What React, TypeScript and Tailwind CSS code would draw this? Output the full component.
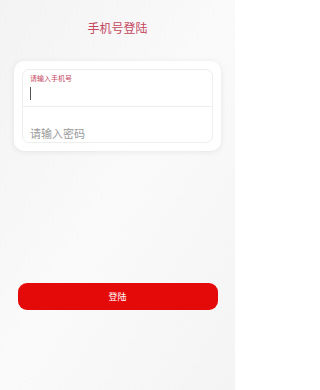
export default function App() {
  return (
    <div
      className="w-[235px] h-[390px] flex flex-col items-center bg-gradient-to-br from-[#f3f3f3] via-[#fafafa] to-[#f4f4f4]"
      style={{ fontFamily: '"Noto Sans CJK SC", "Noto Sans", sans-serif' }}
    >
      <h1 className="mt-[21px] text-[12px] leading-[14px] text-[#c4475f]">手机号登陆</h1>

      <div className="mt-[26px] w-[207px] rounded-[10px] bg-white p-[8px] shadow-[0_1px_6px_rgba(0,0,0,0.08)]">
        <div className="rounded-[7px] border border-[#eeeeee]">
          <div className="h-[37px] border-b border-[#eeeeee] pl-[7px] pt-[4px]">
            <div className="text-[7px] leading-[9px] text-[#c4475f]">请输入手机号</div>
            <div className="mt-[4px] h-[13px] w-px bg-[#555]" />
          </div>
          <div className="h-[35px] flex items-end pb-[2px] pl-[7px]">
            <span className="text-[11px] leading-[14px] text-[#9a9a9a]">请输入密码</span>
          </div>
        </div>
      </div>

      <button className="mt-[132px] w-[200px] h-[27px] rounded-[9px] bg-[#e50a0a] text-white text-[9px] leading-[11px]">
        登陆
      </button>
    </div>
  );
}
